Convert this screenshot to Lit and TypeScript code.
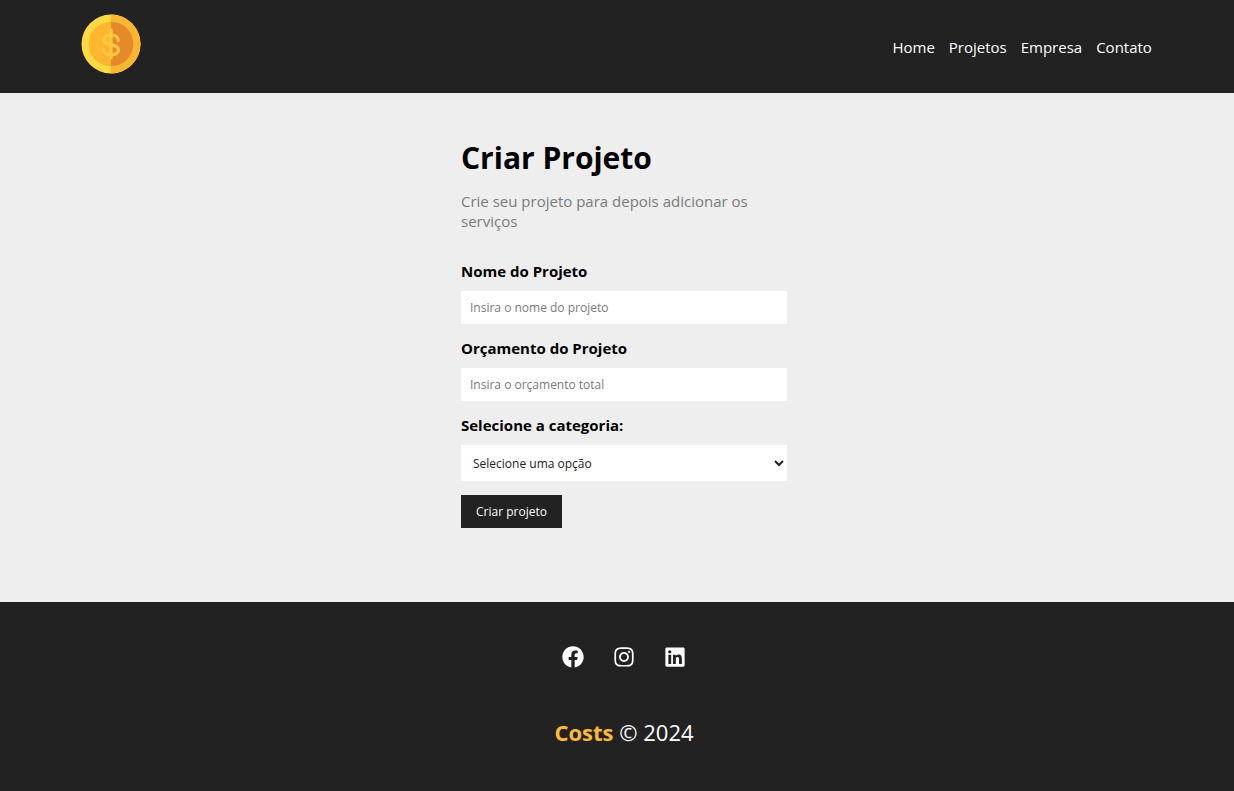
import { LitElement, html, svg, css } from "lit";
import { customElement, state } from "lit/decorators.js";

const links = ["Home", "Projetos", "Empresa", "Contato"];

const social = [
  {
    name: "Facebook",
    box: "0 0 512 512",
    path: "M504 256C504 119 393 8 256 8S8 119 8 256c0 123.78 90.69 226.38 209.25 245V327.69h-63V256h63v-54.64c0-62.15 37-96.48 93.67-96.48 27.14 0 55.52 4.84 55.52 4.84v61h-31.28c-30.8 0-40.41 19.12-40.41 38.73V256h68.78l-11 71.69h-57.78V501C413.31 482.38 504 379.78 504 256z",
  },
  {
    name: "Instagram",
    box: "-32 0 512 512",
    path: "M224.1 141c-63.6 0-114.9 51.3-114.9 114.9s51.3 114.9 114.9 114.9S339 319.5 339 255.9 287.7 141 224.1 141zm0 189.6c-41.1 0-74.7-33.5-74.7-74.7s33.5-74.7 74.7-74.7 74.7 33.5 74.7 74.7-33.6 74.7-74.7 74.7zm146.4-194.3c0 14.9-12 26.8-26.8 26.8-14.9 0-26.8-12-26.8-26.8s12-26.8 26.8-26.8 26.8 12 26.8 26.8zm76.1 27.2c-1.7-35.9-9.9-67.7-36.2-93.9-26.2-26.2-58-34.4-93.9-36.2-37-2.1-147.9-2.1-184.9 0-35.8 1.7-67.6 9.9-93.9 36.1s-34.4 58-36.2 93.9c-2.1 37-2.1 147.9 0 184.9 1.7 35.9 9.9 67.7 36.2 93.9s58 34.4 93.9 36.2c37 2.1 147.9 2.1 184.9 0 35.9-1.7 67.7-9.9 93.9-36.2 26.2-26.2 34.4-58 36.2-93.9 2.1-37 2.1-147.8 0-184.8zM398.8 388c-7.8 19.6-22.9 34.7-42.6 42.6-29.5 11.7-99.5 9-132.1 9s-102.7 2.6-132.1-9c-19.6-7.8-34.7-22.9-42.6-42.6-11.7-29.5-9-99.5-9-132.1s-2.6-102.7 9-132.1c7.8-19.6 22.9-34.7 42.6-42.6 29.5-11.7 99.5-9 132.1-9s102.7-2.6 132.1 9c19.6 7.8 34.7 22.9 42.6 42.6 11.7 29.5 9 99.5 9 132.1s2.7 102.7-9 132.1z",
  },
  {
    name: "LinkedIn",
    box: "-32 0 512 512",
    path: "M416 32H31.9C14.3 32 0 46.5 0 64.3v383.4C0 465.5 14.3 480 31.9 480H416c17.6 0 32-14.5 32-32.3V64.3c0-17.8-14.4-32.3-32-32.3zM135.4 416H69V202.2h66.5V416zm-33.2-243c-21.3 0-38.5-17.3-38.5-38.5S80.9 96 102.2 96c21.2 0 38.5 17.3 38.5 38.5 0 21.3-17.2 38.5-38.5 38.5zm282.1 243h-66.4V312c0-24.8-.5-56.7-34.5-56.7-34.6 0-39.9 27-39.9 54.9V416h-66.4V202.2h63.7v29.2h.9c8.9-16.8 30.6-34.5 62.9-34.5 67.2 0 79.7 44.3 79.7 101.9V416z",
  },
];

const coin = svg`
  <circle cx="30" cy="30" r="29.5" fill="#ffda44" />
  <path d="M30 .5a29.5 29.5 0 0 1 0 59z" fill="#fdb62f" />
  <circle cx="30" cy="30" r="22.3" fill="#fdb62f" />
  <path d="M30 7.7a22.3 22.3 0 0 1 0 44.6z" fill="#e58a2c" />
  <g fill="none" stroke="#fdc63f" stroke-width="3.4" stroke-linecap="round">
    <path d="M37.2 26.4C37.2 22.800 34 20.900 30 20.900C26 20.900 22.800 22.700 22.800 25.800C22.800 29.200 26 29.900 30 30.700C34 31.500 37.400 32.400 37.400 35.700C37.400 39 34 40.700 30 40.700C25.800 40.700 22.600 38.800 22.600 35.400" />
    <path d="M30 16v27.5" />
  </g>`;

@customElement("app-root")
export class AppRoot extends LitElement {
  static styles = css`
    :host {
      display: flex;
      flex-direction: column;
      min-height: 100vh;
      background: #eee;
      color: #000;
      font: 15px/20px "Open Sans", sans-serif;
    }
    * {
      box-sizing: border-box;
    }
    a {
      color: #fff;
      text-decoration: none;
    }
    a:hover {
      color: #ffbb33;
    }
    header,
    main,
    footer {
      padding-left: 14px;
    }
    header,
    footer {
      background: #222;
      color: #fff;
    }
    .bar {
      display: flex;
      align-items: center;
      justify-content: space-between;
      width: 89%;
      max-width: 1200px;
      min-height: 93px;
      margin: 0 auto;
      padding-right: 15px;
    }
    .logo {
      padding-bottom: 5px;
    }
    .logo svg,
    .social svg {
      display: block;
    }
    ul {
      display: flex;
      margin: 0;
      padding: 0;
      list-style: none;
    }
    .menu {
      gap: 14px;
    }
    main {
      flex: 1;
    }
    .panel {
      width: 326px;
      max-width: 100%;
      margin: 0 auto;
      padding: 45px 0 73px;
    }
    h1 {
      margin: 0 0 13px;
      font-size: 30px;
      line-height: 40px;
    }
    .intro {
      margin: 0 0 30px;
      padding-right: 32px;
      color: #7b7b7b;
    }
    form {
      display: flex;
      flex-direction: column;
      align-items: flex-start;
      gap: 14px;
    }
    .field {
      display: flex;
      flex-direction: column;
      gap: 10px;
      width: 100%;
    }
    label {
      font-weight: 700;
    }
    input,
    select,
    button {
      border: 0;
      border-radius: 0;
      font: 12px/17px "Open Sans", sans-serif;
    }
    input {
      width: 100%;
      height: 33px;
      padding: 8px 9px;
      background: #fff;
    }
    input::placeholder {
      color: #7b7b7b;
    }
    select {
      width: 100%;
      height: 36px;
      padding: 8px;
      background: #fff;
      color: #222;
    }
    button {
      padding: 8px 15px;
      background: #222;
      color: #fff;
      cursor: pointer;
    }
    footer {
      display: flex;
      flex-direction: column;
      align-items: center;
      gap: 48px;
      padding-top: 44px;
      padding-bottom: 43px;
    }
    .social {
      gap: 29px;
    }
    .copy {
      margin: 0;
      font-size: 22px;
      line-height: 32px;
    }
    .brand {
      color: #ffbb33;
      font-weight: 700;
    }
  `;

  @state() private name = "";
  @state() private budget = "";

  render() {
    return html`
      <header>
        <div class="bar">
          <a class="logo" href="#" aria-label="Costs">
            <svg width="60" height="60" viewBox="0 0 60 60">${coin}</svg>
          </a>
          <nav>
            <ul class="menu">
              ${links.map((l) => html`<li><a href="#${l.toLowerCase()}">${l}</a></li>`)}
            </ul>
          </nav>
        </div>
      </header>
      <main>
        <div class="panel">
          <h1>Criar Projeto</h1>
          <p class="intro">Crie seu projeto para depois adicionar os serviços</p>
          <form @submit=${(e: Event) => e.preventDefault()}>
            <div class="field">
              <label for="name">Nome do Projeto</label>
              <input
                id="name"
                type="text"
                placeholder="Insira o nome do projeto"
                .value=${this.name}
                @input=${(e: Event) => (this.name = (e.target as HTMLInputElement).value)}
              />
            </div>
            <div class="field">
              <label for="budget">Orçamento do Projeto</label>
              <input
                id="budget"
                type="number"
                placeholder="Insira o orçamento total"
                .value=${this.budget}
                @input=${(e: Event) => (this.budget = (e.target as HTMLInputElement).value)}
              />
            </div>
            <div class="field">
              <label for="category">Selecione a categoria:</label>
              <select id="category">
                <option>Selecione uma opção</option>
              </select>
            </div>
            <button type="submit">Criar projeto</button>
          </form>
        </div>
      </main>
      <footer>
        <ul class="social">
          ${social.map(
            (s) => html`<li>
              <a href="#" aria-label=${s.name}>
                <svg width="22" height="22" viewBox=${s.box} fill="currentColor"><path d=${s.path} /></svg>
              </a>
            </li>`
          )}
        </ul>
        <p class="copy"><span class="brand">Costs</span> © 2024</p>
      </footer>
    `;
  }
}
